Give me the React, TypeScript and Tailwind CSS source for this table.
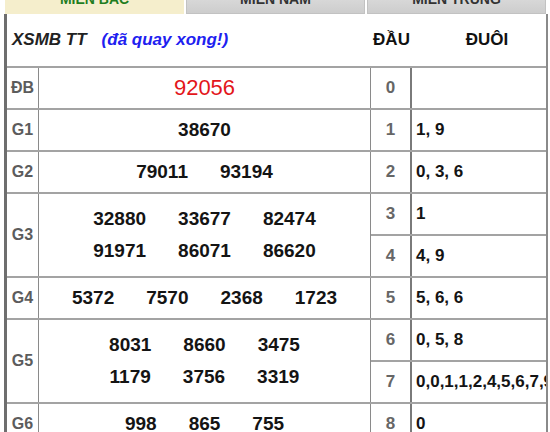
import React from "react";

type Prize = {
  label: string;
  lines: string[][];
  special?: boolean;
  dau: [string, string][];
};

const prizes: Prize[] = [
  { label: "ĐB", lines: [["92056"]], special: true, dau: [["0", ""]] },
  { label: "G1", lines: [["38670"]], dau: [["1", "1, 9"]] },
  { label: "G2", lines: [["79011", "93194"]], dau: [["2", "0, 3, 6"]] },
  {
    label: "G3",
    lines: [
      ["32880", "33677", "82474"],
      ["91971", "86071", "86620"],
    ],
    dau: [
      ["3", "1"],
      ["4", "4, 9"],
    ],
  },
  { label: "G4", lines: [["5372", "7570", "2368", "1723"]], dau: [["5", "5, 6, 6"]] },
  {
    label: "G5",
    lines: [
      ["8031", "8660", "3475"],
      ["1179", "3756", "3319"],
    ],
    dau: [
      ["6", "0, 5, 8"],
      ["7", "0,0,1,1,2,4,5,6,7,9"],
    ],
  },
  { label: "G6", lines: [["998", "865", "755"]], dau: [["8", "0"]] },
];

const tabs = ["MIỀN BẮC", "MIỀN NAM", "MIỀN TRUNG"];

const PrizeRow = ({ prize }: { prize: Prize }) => {
  const height = prize.dau.length * 42;
  return (
    <div className="flex border-b-2 border-[#a3a3a3]" style={{ height }}>
      <div className="w-[32px] shrink-0 border-r border-[#8a8a8a] flex items-center justify-center text-[16px] font-bold text-[#5c5c5c]">
        {prize.label}
      </div>
      <div className="w-[332px] shrink-0 border-r border-[#8a8a8a] flex flex-col justify-center">
        {prize.lines.map((line, i) => (
          <div key={i} className="flex justify-center gap-[32px] leading-[32px]">
            {line.map((n) =>
              prize.special ? (
                <span key={n} className="text-[22px] text-[#e3161b]">
                  {n}
                </span>
              ) : (
                <span key={n} className="text-[19px] font-bold text-[#141414]">
                  {n}
                </span>
              )
            )}
          </div>
        ))}
      </div>
      <div className="flex-1 min-w-0 flex flex-col">
        {prize.dau.map(([d, tail], i) => (
          <div
            key={d}
            className={
              i < prize.dau.length - 1
                ? "h-[42px] flex border-b-2 border-[#a3a3a3]"
                : "flex-1 flex"
            }
          >
            <div className="w-[41px] shrink-0 border-r-2 border-[#7a7a7a] flex items-center justify-center text-[17px] font-bold text-[#666]">
              {d}
            </div>
            <div className="flex-1 min-w-0 overflow-hidden whitespace-nowrap flex items-center pl-[4px] text-[17px] font-bold text-[#141414]">
              {tail}
            </div>
          </div>
        ))}
      </div>
    </div>
  );
};

export default function App() {
  return (
    <div className="w-[550px] h-[432px] overflow-hidden bg-white font-['Liberation_Sans',Arial,sans-serif]">
      <div className="flex gap-[2px] pl-[5px] -mt-[16px]">
        {tabs.map((t, i) => (
          <div
            key={t}
            className={
              i === 0
                ? "w-[179px] h-[30px] flex items-center justify-center bg-[#f5eecc] text-[14px] font-bold text-[#1f7d1f]"
                : "w-[179px] h-[30px] flex items-center justify-center bg-gradient-to-b from-[#e4e4e4] to-[#cdcdcd] border border-[#c2c2c2] text-[14px] font-bold text-[#333]"
            }
          >
            {t}
          </div>
        ))}
      </div>

      <div className="ml-[4px] w-[544px] border-l-[3px] border-r-2 border-l-[#6e6e6e] border-r-[#8a8a8a]">
        <div className="h-[54px] flex items-center border-b-2 border-[#a3a3a3]">
          <div className="w-[364px] shrink-0 pl-[5px] italic font-bold text-[17px]">
            <span className="text-[#222]">XSMB TT</span>
            <span className="ml-[15px] text-[#2020f0]">(đã quay xong!)</span>
          </div>
          <div className="w-[41px] shrink-0 text-center font-bold text-[17px] text-[#111]">ĐẦU</div>
          <div className="flex-1 pl-[16px] text-center font-bold text-[17px] text-[#111]">ĐUÔI</div>
        </div>

        {prizes.map((p) => (
          <PrizeRow key={p.label} prize={p} />
        ))}
      </div>
    </div>
  );
}
